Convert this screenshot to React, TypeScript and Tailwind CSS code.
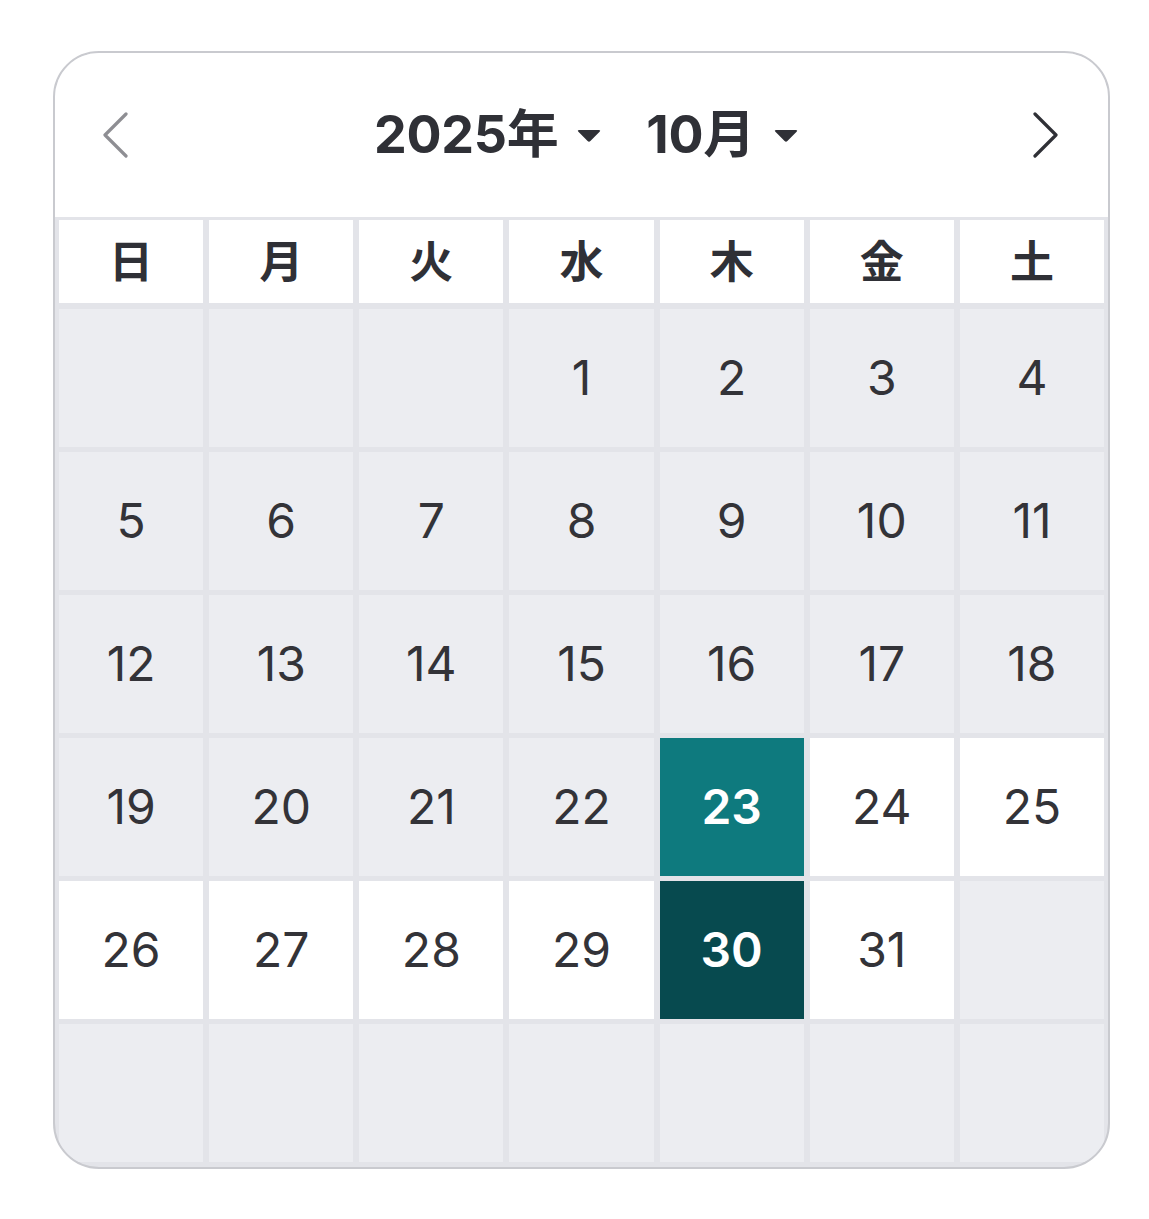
import React from 'react';

const weekdays = ['日', '月', '火', '水', '木', '金', '土'];

// 2025年10月: starts on Wednesday
const cells: (number | null)[] = [
  null, null, null, 1, 2, 3, 4,
  5, 6, 7, 8, 9, 10, 11,
  12, 13, 14, 15, 16, 17, 18,
  19, 20, 21, 22, 23, 24, 25,
  26, 27, 28, 29, 30, 31, null,
  null, null, null, null, null, null, null,
];

const Caret = () => (
  <svg width="26" height="15" viewBox="0 0 26 15" className="shrink-0">
    <path d="M3 2 H23 Q25 2 23.6 3.8 L14.4 13 Q13 14.4 11.6 13 L2.4 3.8 Q1 2 3 2 Z" fill="#2f3036" />
  </svg>
);

const App: React.FC = () => {
  const font = { fontFamily: 'Inter, "Noto Sans CJK JP", sans-serif' };

  const cellClass = (d: number | null) => {
    if (d === 23) return 'bg-[#0e7a7e] text-white font-semibold';
    if (d === 30) return 'bg-[#074a4f] text-white font-semibold';
    if (d !== null && d >= 24) return 'bg-white text-[#333338]';
    return 'bg-[#ecedf1] text-[#333338]';
  };

  return (
    <div className="min-h-screen bg-white pt-[51px] pl-[53px]" style={font}>
      <div className="w-[1057px] rounded-[46px] border-2 border-[#c9cacf] overflow-hidden bg-[#e3e4e9]">
        {/* header */}
        <div className="h-[164px] bg-white flex items-center justify-between pl-[46px] pr-[48px]">
          <svg width="28" height="46" viewBox="0 0 28 46">
            <path d="M25 2 L4 23 L25 44" fill="none" stroke="#8e8e93" strokeWidth="3.2" strokeLinecap="round" strokeLinejoin="round" />
          </svg>
          <div className="flex items-center ml-[12px] text-[#2f3036] font-bold text-[52px] leading-none tracking-[-0.3px]">
            <span>2025年</span>
            <span className="ml-[18px]"><Caret /></span>
            <span className="ml-[44px]">10月</span>
            <span className="ml-[18px]"><Caret /></span>
          </div>
          <svg width="28" height="46" viewBox="0 0 28 46">
            <path d="M3 2 L24 23 L3 44" fill="none" stroke="#2f3036" strokeWidth="3.2" strokeLinecap="round" strokeLinejoin="round" />
          </svg>
        </div>

        {/* grid */}
        <div className="grid grid-cols-7 gap-x-[6px] gap-y-[5px] pt-[3px] pb-[5px] pl-[4px] pr-[4px]">
          {weekdays.map((w) => (
            <div key={w} className="h-[83px] mb-[1px] bg-white flex items-center justify-center text-[44px] font-bold text-[#2f3036]">
              {w}
            </div>
          ))}
          {cells.map((d, i) => (
            <div key={i} className={`h-[138px] flex items-center justify-center text-[48px] ${cellClass(d)}`}>
              {d ?? ''}
            </div>
          ))}
        </div>
      </div>
    </div>
  );
};

export default App;
